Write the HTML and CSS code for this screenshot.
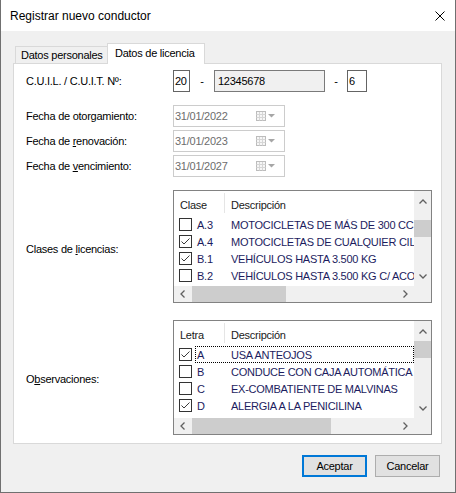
FILE: index.html
```html
<!DOCTYPE html>
<html lang="es">
<head>
<meta charset="utf-8">
<title>Registrar nuevo conductor</title>
<link rel="stylesheet" href="styles.css">
</head>
<body>
<div class="window">
  <div class="titlebar">
    <span class="title">Registrar nuevo conductor</span>
    <svg class="close" width="10" height="10" viewBox="0 0 10 10"><path d="M0.5 0.5 L9.5 9.5 M9.5 0.5 L0.5 9.5" stroke="#000" stroke-width="1" fill="none"/></svg>
  </div>
  <div class="content">
    <div class="tabs">
      <div class="tab">Datos personales</div>
      <div class="tab active">Datos de licencia</div>
    </div>
    <div class="panel">
      <div class="row row-cuil">
        <span class="lbl">C.U.I.L. / C.U.I.T. Nº:</span>
        <span class="tb tb-2">20</span>
        <span class="dash d1">-</span>
        <span class="tb tb-ro">12345678</span>
        <span class="dash d2">-</span>
        <span class="tb tb-1">6</span>
      </div>

      <div class="row row-date first">
        <span class="lbl">Fecha de otorgamiento:</span>
        <span class="dtp"><span class="dtxt">31/01/2022</span>
          <svg class="cal" width="10" height="10" viewBox="0 0 10 10"><rect x="0.5" y="0.5" width="9" height="9" fill="#f6f6f6" stroke="#bcbcbc"/><path d="M0.5 3.5 H9.5 M0.5 6.5 H9.5 M3.5 1 V9.5 M6.5 1 V9.5" stroke="#d6d6d6" fill="none"/></svg>
          <svg class="arr" width="7" height="4" viewBox="0 0 7 4"><path d="M0 0 H7 L3.5 3.5 Z" fill="#a6a6a6"/></svg>
        </span>
      </div>
      <div class="row row-date">
        <span class="lbl">Fecha de <u>r</u>enovación:</span>
        <span class="dtp"><span class="dtxt">31/01/2023</span>
          <svg class="cal" width="10" height="10" viewBox="0 0 10 10"><rect x="0.5" y="0.5" width="9" height="9" fill="#f6f6f6" stroke="#bcbcbc"/><path d="M0.5 3.5 H9.5 M0.5 6.5 H9.5 M3.5 1 V9.5 M6.5 1 V9.5" stroke="#d6d6d6" fill="none"/></svg>
          <svg class="arr" width="7" height="4" viewBox="0 0 7 4"><path d="M0 0 H7 L3.5 3.5 Z" fill="#a6a6a6"/></svg>
        </span>
      </div>
      <div class="row row-date">
        <span class="lbl">Fecha de <u>v</u>encimiento:</span>
        <span class="dtp"><span class="dtxt">31/01/2027</span>
          <svg class="cal" width="10" height="10" viewBox="0 0 10 10"><rect x="0.5" y="0.5" width="9" height="9" fill="#f6f6f6" stroke="#bcbcbc"/><path d="M0.5 3.5 H9.5 M0.5 6.5 H9.5 M3.5 1 V9.5 M6.5 1 V9.5" stroke="#d6d6d6" fill="none"/></svg>
          <svg class="arr" width="7" height="4" viewBox="0 0 7 4"><path d="M0 0 H7 L3.5 3.5 Z" fill="#a6a6a6"/></svg>
        </span>
      </div>

      <div class="row row-list">
        <span class="lbl lbl-l1">Clases de <u>l</u>icencias:</span>
        <div class="lv lv1">
          <div class="lv-body">
            <div class="lv-head"><span class="hc1">Clase</span><span class="hc2">Descripción</span></div>
            <div class="lv-row"><span class="cbc"><span class="cb"></span></span><span class="cells"><span class="code">A.3</span><span class="desc">MOTOCICLETAS DE MÁS DE 300 CC.</span></span></div>
            <div class="lv-row"><span class="cbc"><span class="cb on"><svg width="11" height="11" viewBox="0 0 11 11"><path d="M1.5 5.5 L4 8 L9.5 2.5" stroke="#3a3a3a" stroke-width="1" fill="none"/></svg></span></span><span class="cells"><span class="code">A.4</span><span class="desc">MOTOCICLETAS DE CUALQUIER CILINDRADA</span></span></div>
            <div class="lv-row"><span class="cbc"><span class="cb on"><svg width="11" height="11" viewBox="0 0 11 11"><path d="M1.5 5.5 L4 8 L9.5 2.5" stroke="#3a3a3a" stroke-width="1" fill="none"/></svg></span></span><span class="cells"><span class="code">B.1</span><span class="desc">VEHÍCULOS HASTA 3.500 KG</span></span></div>
            <div class="lv-row"><span class="cbc"><span class="cb"></span></span><span class="cells"><span class="code">B.2</span><span class="desc">VEHÍCULOS HASTA 3.500 KG C/ ACOPLADO</span></span></div>
          </div>
          <div class="vsb">
            <span class="sbtn"><svg width="8" height="5" viewBox="0 0 8 5"><path d="M0.5 4.5 L4 1 L7.5 4.5" stroke="#606060" stroke-width="1.3" fill="none"/></svg></span>
            <span class="vtrack"><span class="vthumb t1"></span></span>
            <span class="sbtn"><svg width="8" height="5" viewBox="0 0 8 5"><path d="M0.5 0.5 L4 4 L7.5 0.5" stroke="#606060" stroke-width="1.3" fill="none"/></svg></span>
          </div>
          <div class="hsb">
            <span class="hbtn"><svg width="5" height="8" viewBox="0 0 5 8"><path d="M4.5 0.5 L1 4 L4.5 7.5" stroke="#606060" stroke-width="1.3" fill="none"/></svg></span>
            <span class="htrack"><span class="hthumb" style="width:94px"></span></span>
            <span class="hbtn"><svg width="5" height="8" viewBox="0 0 5 8"><path d="M0.5 0.5 L4 4 L0.5 7.5" stroke="#606060" stroke-width="1.3" fill="none"/></svg></span>
          </div>
          <div class="corner"></div>
        </div>
      </div>

      <div class="row row-list second">
        <span class="lbl lbl-l2">O<u>b</u>servaciones:</span>
        <div class="lv lv2">
          <div class="lv-body">
            <div class="lv-head"><span class="hc1">Letra</span><span class="hc2">Descripción</span></div>
            <div class="lv-row"><span class="cbc"><span class="cb on"><svg width="11" height="11" viewBox="0 0 11 11"><path d="M1.5 5.5 L4 8 L9.5 2.5" stroke="#3a3a3a" stroke-width="1" fill="none"/></svg></span></span><span class="cells focus"><span class="code">A</span><span class="desc">USA ANTEOJOS</span></span></div>
            <div class="lv-row"><span class="cbc"><span class="cb"></span></span><span class="cells"><span class="code">B</span><span class="desc">CONDUCE CON CAJA AUTOMÁTICA</span></span></div>
            <div class="lv-row"><span class="cbc"><span class="cb"></span></span><span class="cells"><span class="code">C</span><span class="desc">EX-COMBATIENTE DE MALVINAS</span></span></div>
            <div class="lv-row"><span class="cbc"><span class="cb on"><svg width="11" height="11" viewBox="0 0 11 11"><path d="M1.5 5.5 L4 8 L9.5 2.5" stroke="#3a3a3a" stroke-width="1" fill="none"/></svg></span></span><span class="cells"><span class="code">D</span><span class="desc">ALERGIA A LA PENICILINA</span></span></div>
          </div>
          <div class="vsb">
            <span class="sbtn"><svg width="8" height="5" viewBox="0 0 8 5"><path d="M0.5 4.5 L4 1 L7.5 4.5" stroke="#606060" stroke-width="1.3" fill="none"/></svg></span>
            <span class="vtrack"><span class="vthumb t2"></span></span>
            <span class="sbtn"><svg width="8" height="5" viewBox="0 0 8 5"><path d="M0.5 0.5 L4 4 L7.5 0.5" stroke="#606060" stroke-width="1.3" fill="none"/></svg></span>
          </div>
          <div class="hsb">
            <span class="hbtn"><svg width="5" height="8" viewBox="0 0 5 8"><path d="M4.5 0.5 L1 4 L4.5 7.5" stroke="#606060" stroke-width="1.3" fill="none"/></svg></span>
            <span class="htrack"><span class="hthumb" style="width:139px"></span></span>
            <span class="hbtn"><svg width="5" height="8" viewBox="0 0 5 8"><path d="M0.5 0.5 L4 4 L0.5 7.5" stroke="#606060" stroke-width="1.3" fill="none"/></svg></span>
          </div>
          <div class="corner"></div>
        </div>
      </div>
    </div>
    <div class="footer">
      <button class="btn default">Aceptar</button>
      <button class="btn">Cancelar</button>
    </div>
  </div>
</div>
</body>
</html>
```
FILE: styles.css
```css
* { box-sizing: border-box; }
html, body { margin: 0; padding: 0; background: #fff; }
body {
  font-family: "Liberation Sans", Arial, sans-serif;
  font-size: 11px;
  letter-spacing: -0.25px;
  color: #000;
}
u { text-decoration: underline; text-underline-offset: 1px; }

.window {
  width: 456px;
  height: 493px;
  border: 1px solid #707070;
  border-top: 0;
  background: #f0f0f0;
  display: flex;
  flex-direction: column;
}
.titlebar {
  flex: none;
  height: 31px;
  background: #fff;
  display: flex;
  align-items: center;
  justify-content: space-between;
  padding: 0 10px 0 9px;
}
.title { font-size: 12px; letter-spacing: 0; color: #000; }
.close { display: block; }

.content {
  flex: 1;
  padding: 12px 13px 0 12px;
  display: flex;
  flex-direction: column;
}
.tabs {
  display: flex;
  align-items: flex-end;
  height: 20px;
  padding-left: 2px;
}
.tab {
  height: 17px;
  width: 93px;
  border: 1px solid #d9d9d9;
  border-bottom: 0;
  background: #f0f0f0;
  display: flex;
  align-items: center;
  padding-left: 5px;
  white-space: nowrap;
}
.tab.active {
  position: relative;
  z-index: 1;
  height: 21px;
  width: 98px;
  margin-left: -1px;
  margin-bottom: -1px;
  background: #fff;
  padding-left: 7px;
  padding-bottom: 2px;
}
.panel {
  height: 381px;
  border: 1px solid #d9d9d9;
  background: #fff;
  padding: 6px 0 0 12px;
  display: flex;
  flex-direction: column;
}

.row { display: flex; align-items: center; }
.lbl { width: 147px; flex: none; white-space: nowrap; }
.row-cuil { height: 22px; }
.row-date { height: 22px; margin-top: 3px; }
.row-date.first { margin-top: 13px; }
.row-list { margin-top: 13px; }
.row-list.second { margin-top: 17px; }
.lbl-l1 { margin-top: 5px; }
.lbl-l2 { margin-top: 3px; }

.tb {
  height: 22px;
  border: 1px solid #646464;
  background: #fff;
  display: flex;
  align-items: center;
  padding-left: 1px;
}
.tb-2 { width: 17px; }
.tb-1 { width: 20px; }
.tb-ro { width: 111px; background: #f0f0f0; border-color: #7a7a7a; padding-left: 3px; }
.dash { text-align: center; }
.d1 { width: 24px; }
.d2 { width: 22px; }

.dtp {
  width: 112px;
  height: 22px;
  border: 1px solid #cccccc;
  background: #fff;
  color: #6d6d6d;
  display: flex;
  align-items: center;
  padding-left: 1px;
}
.dtxt { flex: 1; }
.cal { display: block; margin-right: 2px; }
.arr { display: block; margin-right: 9px; }

.lv {
  width: 259px;
  border: 1px solid #828282;
  background: #fff;
  display: grid;
  grid-template-columns: 1fr 17px;
  grid-template-rows: 1fr 16px;
}
.lv1 { height: 113px; }
.lv2 { height: 115px; }
.lv-body { overflow: hidden; min-width: 0; }
.lv-head { height: 25px; display: flex; color: #1a1a1a; }
.hc1 {
  width: 51px;
  flex: none;
  padding: 8px 0 0 6px;
  border-right: 1px solid #e5e5e5;
  margin: 2px 0 3px;
}
.hc2 { padding: 8px 0 0 6px; margin-top: 2px; }
.hc1 { padding-top: 6px; }
.hc2 { padding-top: 6px; }
.lv-row { height: 17px; display: flex; align-items: center; color: #1c1c5e; }
.cbc { width: 21px; flex: none; padding-left: 5px; display: flex; align-items: center; }
.cb {
  width: 13px;
  height: 13px;
  border: 1px solid #333;
  background: #fff;
  display: block;
}
.cb svg { display: block; }
.cells {
  flex: 1;
  min-width: 0;
  height: 17px;
  display: flex;
  align-items: center;
  overflow: hidden;
  white-space: nowrap;
}
.cells.focus { outline: 1px dotted #000; outline-offset: -1px; }
.code { width: 36px; flex: none; padding-left: 2px; }
.desc { white-space: nowrap; }

.vsb { display: flex; flex-direction: column; background: #f0f0f0; }
.sbtn { height: 20px; flex: none; display: flex; align-items: center; justify-content: center; }
.vtrack { flex: 1; display: flex; flex-direction: column; }
.vthumb { display: block; height: 17px; background: #cdcdcd; }
.vthumb.t1 { margin-top: 9px; }
.vthumb.t2 { margin-top: 0; }
.hsb { display: flex; background: #f0f0f0; }
.hbtn { width: 17px; flex: none; display: flex; align-items: center; justify-content: center; }
.htrack { flex: 1; display: flex; }
.hthumb { display: block; height: 100%; background: #cdcdcd; margin-left: 1px; }
.corner { background: #f0f0f0; }

.footer {
  display: flex;
  justify-content: flex-end;
  gap: 8px;
  margin-top: 11px;
  padding-right: 2px;
}
.btn {
  width: 65px;
  height: 22px;
  font: inherit;
  letter-spacing: inherit;
  color: #000;
  background: #e1e1e1;
  border: 1px solid #adadad;
  padding: 0;
  text-align: center;
}
.btn.default { border: 2px solid #0078d7; }
```
